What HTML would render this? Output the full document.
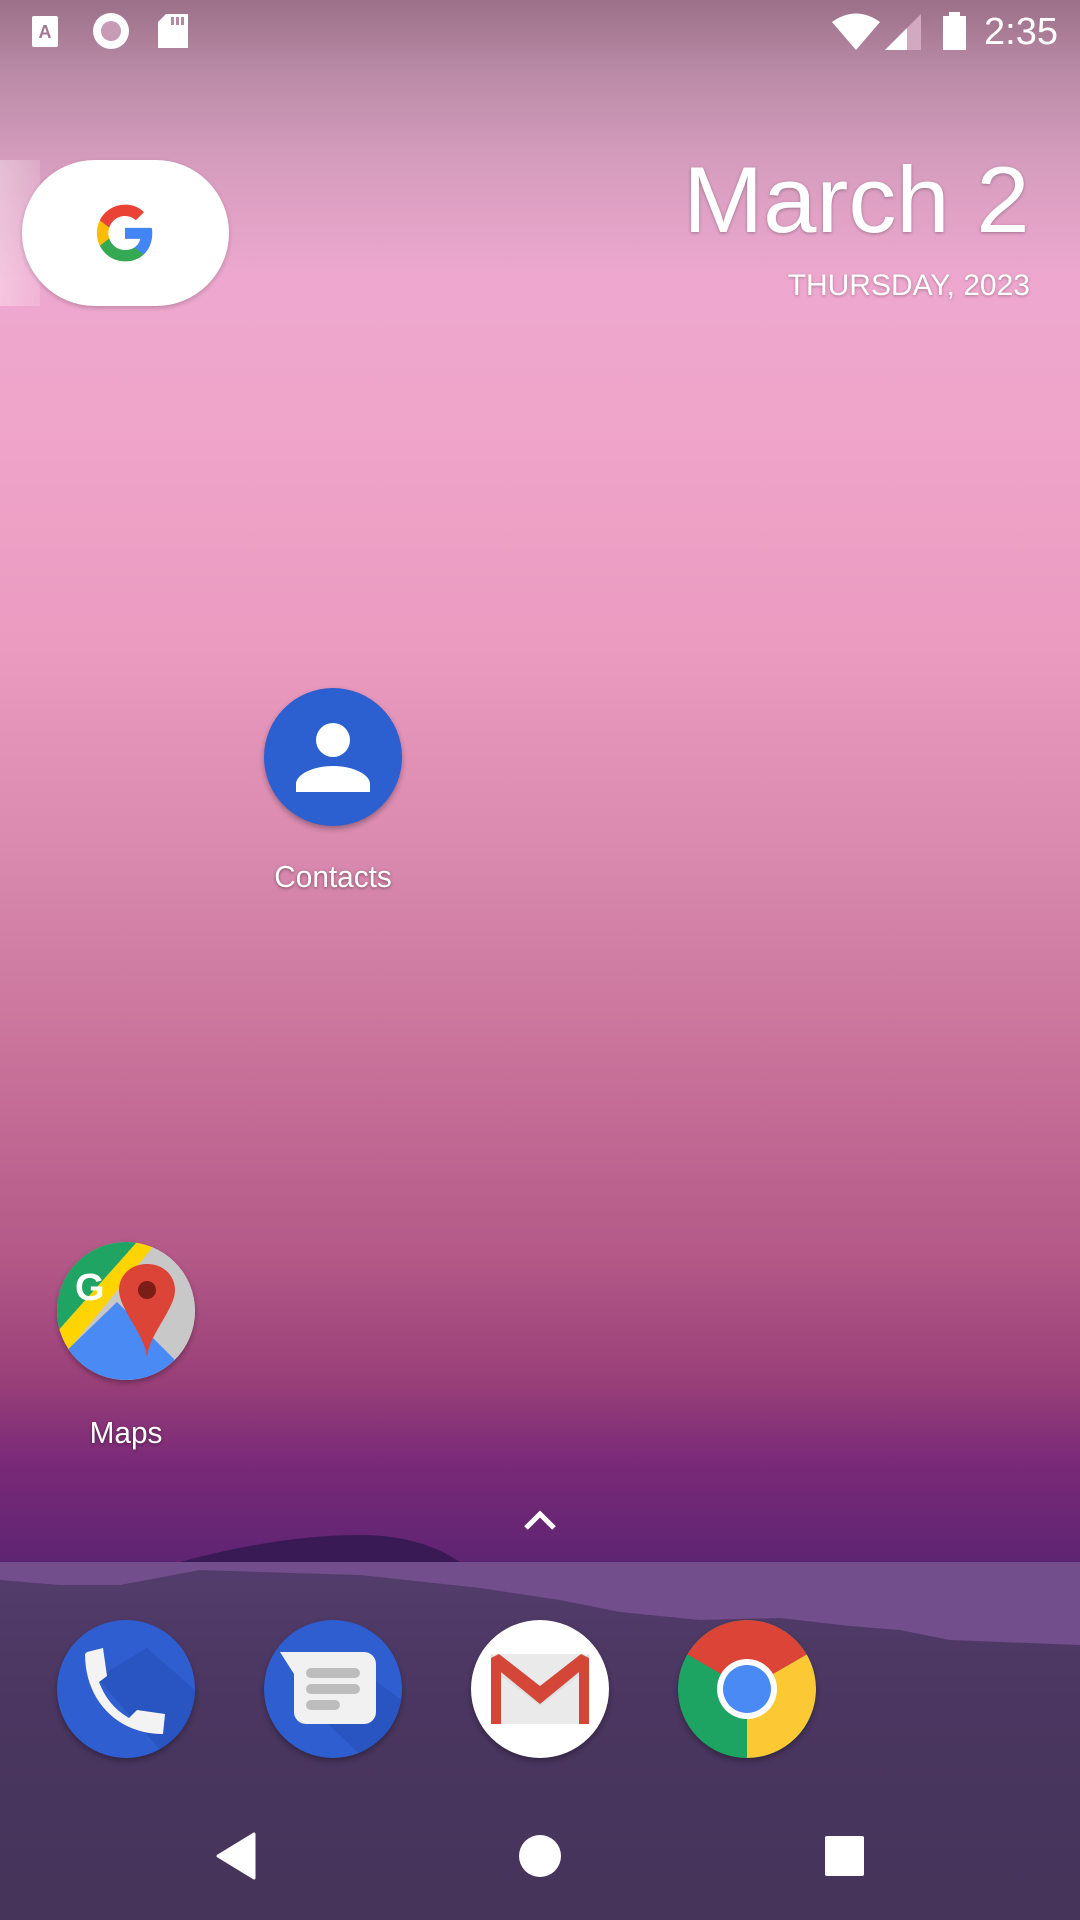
<!DOCTYPE html>
<html><head><meta charset="utf-8"><style>
*{margin:0;padding:0;box-sizing:border-box}
body{width:1080px;height:1920px;overflow:hidden;position:relative;font-family:"Liberation Sans",sans-serif;
background:linear-gradient(180deg,#9c7088 0px,#b98aa6 70px,#d59cbd 160px,#eea8cf 280px,#efa3c8 450px,#eb9ac0 650px,#d98aae 850px,#c9739b 1050px,#b55a88 1250px,#9a4079 1380px,#7a2a78 1460px,#5e2472 1562px);}
.abs{position:absolute}
.txt{color:#fff;text-shadow:0 1px 3px rgba(0,0,0,.3)}
.lbl{position:absolute;color:#fff;font-size:31px;text-align:center;width:240px;transform:scaleX(.96);text-shadow:0 1px 3px rgba(0,0,0,.45)}
.ic{position:absolute;border-radius:50%;box-shadow:0 3px 6px rgba(0,0,0,.3);overflow:hidden}
</style></head><body>
<svg class="abs" style="left:0;top:0" width="1080" height="72">
<rect x="32" y="16" width="26" height="31" rx="2" fill="#fff"/>
<text x="45" y="38" font-size="18" font-weight="bold" fill="#a27890" text-anchor="middle" font-family="Liberation Sans">A</text>
<circle cx="111" cy="31" r="18" fill="#fff"/><circle cx="111" cy="31" r="10" fill="#c79ab5"/>
<path d="M166 14h22v34h-30v-26z" fill="#fff"/><rect x="171" y="17" width="3" height="8" fill="#b58aa2"/><rect x="176" y="17" width="3" height="8" fill="#b58aa2"/><rect x="181" y="17" width="3" height="8" fill="#b58aa2"/>
<path d="M832 22 Q856 5 880 22 L856 50Z" fill="#fff"/>
<path d="M885 50 L921 14 V50Z" fill="#d2a9c0"/><path d="M885 50 L907 28 V50Z" fill="#fff"/>
<rect x="943" y="16" width="23" height="34" fill="#fff"/><rect x="949" y="12" width="11" height="5" fill="#fff"/>
<text x="1058" y="44" font-size="38" fill="#fff" text-anchor="end" font-family="Liberation Sans">2:35</text>
</svg>
<div class="abs" style="left:0;top:160px;width:40px;height:146px;background:linear-gradient(90deg,rgba(255,255,255,.35),rgba(255,255,255,.15))"></div>
<div class="abs" style="left:22px;top:160px;width:207px;height:146px;border-radius:73px;background:#fff;box-shadow:0 2px 5px rgba(0,0,0,.2)"></div>
<svg class="abs" style="left:94px;top:202px" width="62" height="62" viewBox="0 0 48 48">
<path fill="#4285F4" d="M45.1 24.5c0-1.6-.1-3.1-.4-4.5H24v8.5h11.8c-.5 2.7-2.1 5-4.4 6.6v5.5h7.1c4.2-3.8 6.6-9.5 6.6-16.1z"/>
<path fill="#34A853" d="M24 46c5.9 0 10.9-2 14.5-5.4l-7.1-5.5c-2 1.3-4.5 2.1-7.4 2.1-5.7 0-10.5-3.8-12.2-9H4.5v5.7C8.1 41.1 15.5 46 24 46z"/>
<path fill="#FBBC05" d="M11.8 28.2c-.4-1.3-.7-2.7-.7-4.2s.3-2.9.7-4.2v-5.7H4.5C3 17.1 2.2 20.5 2.2 24s.8 6.9 2.3 9.9l7.3-5.7z"/>
<path fill="#EA4335" d="M24 10.8c3.2 0 6.1 1.1 8.4 3.3l6.3-6.3C34.9 4.2 29.9 2 24 2 15.5 2 8.1 6.9 4.5 14.1l7.3 5.7c1.7-5.2 6.5-9 12.2-9z"/>
</svg>
<div class="abs txt" style="right:50px;top:146px;font-size:94px;font-weight:300;transform:scaleX(1.02);transform-origin:right">March 2</div>
<div class="abs txt" style="right:50px;top:269px;font-size:30px;transform:scaleX(1);transform-origin:right">THURSDAY, 2023</div>
<div class="ic" style="left:264px;top:688px;width:138px;height:138px;background:#2c5fcf">
<svg width="138" height="138"><circle cx="69" cy="52" r="17" fill="#fff"/><path d="M32 104v-8c0-10 18-18 37-18s37 8 37 18v8z" fill="#fff"/></svg></div>
<div class="lbl" style="left:213px;top:859px">Contacts</div>
<div class="ic" style="left:57px;top:1242px;width:138px;height:138px;background:#d0d0d0">
<svg width="138" height="138" viewBox="0 0 138 138">
<path d="M0 0H80L0 90Z" fill="#1fa463"/>
<path d="M0 90L80 0H100L10 110Z" fill="#ffd400"/>
<path d="M10 110L100 0h38v138H0z" fill="#c8c8c8"/>
<path d="M0 138V118L60 60L138 138Z" fill="#4a8af4"/>
<text x="18" y="58" font-size="38" font-weight="bold" fill="#fff" font-family="Liberation Sans">G</text>
<path d="M90 22c-17 0-28 12-28 26 0 20 28 46 28 70 0-24 28-50 28-70 0-14-11-26-28-26z" fill="#db4437"/>
<circle cx="90" cy="48" r="9" fill="#7b1e15"/>
</svg></div>
<div class="lbl" style="left:6px;top:1415px">Maps</div>
<svg class="abs" style="left:522px;top:1508px" width="36" height="24"><path d="M4 20L18 6L32 20" stroke="#fff" stroke-width="5" fill="none"/></svg>
<div class="abs" style="left:0;top:1562px;width:1080px;height:358px;background:linear-gradient(180deg,#533d6c,#4a3660 40%,#46345a)"></div>
<svg class="abs" style="left:0;top:1530px" width="1080" height="190">
<path d="M180 32 Q280 5 360 5 Q420 5 460 32Z" fill="#3a1a55"/>
<path d="M0 50 L60 55 L120 55 L200 40 L360 45 L480 58 L560 70 L620 82 L700 90 L780 88 L850 96 L900 100 L950 110 L1080 115 V32 H0Z" fill="#734e8c"/>
</svg>
<div class="ic" style="left:57px;top:1620px;width:138px;height:138px;background:#2e5ed0">
<svg width="138" height="138"><path d="M40 58 L110 138 H138 V70 L90 28Z" fill="#2550b8" opacity=".6"/>
<path d="M30 32 L46 28 L50 56 L42 62 C48 78 58 90 72 98 L80 90 L108 94 L106 114 C60 114 28 80 28 34Z" fill="#f3f3f3"/></svg></div>
<div class="ic" style="left:264px;top:1620px;width:138px;height:138px;background:#2e5ed0">
<svg width="138" height="138"><path d="M60 100 L100 138 H138 V80 L110 60Z" fill="#2550b8" opacity=".6"/>
<path d="M16 32 H100 a12 12 0 0 1 12 12 V92 a12 12 0 0 1 -12 12 H42 a12 12 0 0 1 -12 -12 V54Z" fill="#f1f1f1"/>
<rect x="42" y="48" width="54" height="10" rx="5" fill="#bdbdbd"/><rect x="42" y="64" width="54" height="10" rx="5" fill="#bdbdbd"/><rect x="42" y="80" width="34" height="10" rx="5" fill="#bdbdbd"/></svg></div>
<div class="ic" style="left:471px;top:1620px;width:138px;height:138px;background:#fff">
<svg width="138" height="138"><rect x="20" y="34" width="98" height="70" fill="#eaeaea"/>
<path d="M20 34 L69 74 L118 34 V48 L69 86 L20 48Z" fill="#e0e0e0"/>
<path d="M20 38 V104 H30 V52 L69 84 L108 52 V104 H118 V38 L110 34 L69 66 L28 34Z" fill="#d44638"/></svg></div>
<div class="ic" style="left:678px;top:1620px;width:138px;height:138px;background:#1da462">
<svg width="138" height="138" viewBox="0 0 138 138">
<path d="M69 69 L9.2 34.5 A69 69 0 0 1 128.8 34.5 Z" fill="#db4437"/>
<path d="M69 69 L128.8 34.5 A69 69 0 0 1 69 138 Z" fill="#fcc934"/>
<path d="M69 69 L69 138 A69 69 0 0 1 9.2 34.5 Z" fill="#1da462"/>
<circle cx="69" cy="69" r="30" fill="#fff"/><circle cx="69" cy="69" r="24" fill="#4a8af4"/></svg></div>
<svg class="abs" style="left:0;top:1820px" width="1080" height="72">
<path d="M254 14 V58 L218 36Z" fill="#fff" stroke="#fff" stroke-width="3" stroke-linejoin="round"/>
<circle cx="540" cy="36" r="21" fill="#fff"/>
<rect x="825" y="16" width="39" height="40" rx="2" fill="#fff"/>
</svg>
</body></html>
